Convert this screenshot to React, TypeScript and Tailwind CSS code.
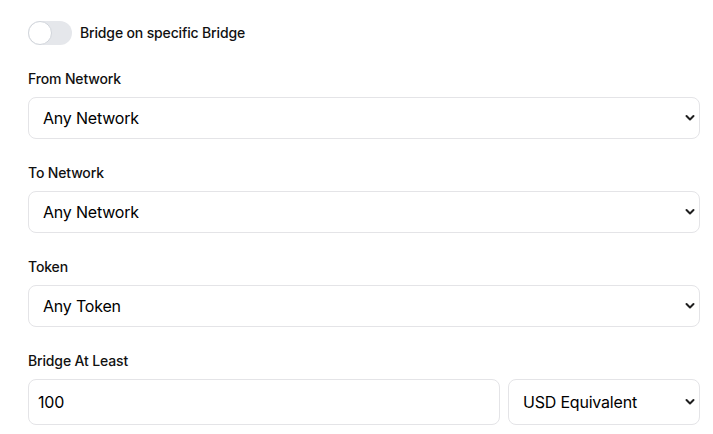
import { useState } from 'react';

const font = { fontFamily: 'Inter, "Liberation Sans", sans-serif' };

function Chevron() {
  return (
    <svg
      className="pointer-events-none absolute right-[5px] top-1/2 -translate-y-1/2"
      width="10"
      height="7"
      viewBox="0 0 10 7"
      fill="none"
    >
      <path d="M1.5 1.5L5 5L8.5 1.5" stroke="#1f1f1f" strokeWidth="2" strokeLinecap="round" strokeLinejoin="round" />
    </svg>
  );
}

function SelectBox({ value, options, className = '', height = 'h-[42px]' }: { value: string; options: string[]; className?: string; height?: string }) {
  return (
    <div className={`relative ${className}`}>
      <select
        defaultValue={value}
        className={`${height} w-full appearance-none rounded-lg border border-[#e4e4e7] bg-white pl-[14px] pr-8 text-base tracking-[-0.2px] text-black outline-none`}
      >
        {options.map(o => (
          <option key={o}>{o}</option>
        ))}
      </select>
      <Chevron />
    </div>
  );
}

export default function App() {
  const [enabled, setEnabled] = useState(false);

  return (
    <div className="min-h-screen bg-white pl-7 pr-[13px] pt-[21px]" style={font}>
      <div className="flex flex-col gap-6">
        <label className="flex items-center gap-2 cursor-pointer">
          <button
            type="button"
            onClick={() => setEnabled(!enabled)}
            className={`relative h-6 w-11 rounded-full ${enabled ? 'bg-blue-600' : 'bg-[#e5e7eb]'}`}
          >
            <span
              className={`absolute top-0 h-6 w-6 rounded-full border border-[#d1d5db] bg-white transition ${enabled ? 'left-5' : 'left-0'}`}
            />
          </button>
          <span className="text-sm font-medium tracking-[-0.15px] text-[#111]">Bridge on specific Bridge</span>
        </label>

        <div>
          <p className="text-sm font-medium tracking-[-0.15px] text-[#111]">From Network</p>
          <SelectBox className="mt-2" value="Any Network" options={['Any Network', 'Ethereum', 'Arbitrum']} />
        </div>

        <div>
          <p className="text-sm font-medium tracking-[-0.15px] text-[#111]">To Network</p>
          <SelectBox className="mt-2" value="Any Network" options={['Any Network', 'Ethereum', 'Arbitrum']} />
        </div>

        <div>
          <p className="text-sm font-medium tracking-[-0.15px] text-[#111]">Token</p>
          <SelectBox className="mt-2" value="Any Token" options={['Any Token', 'ETH', 'USDC']} />
        </div>

        <div>
          <p className="text-sm font-medium tracking-[-0.15px] text-[#111]">Bridge At Least</p>
          <div className="mt-2 flex gap-2">
            <input
              type="text"
              defaultValue="100"
              className="h-[46px] flex-1 rounded-lg border border-[#e4e4e7] bg-white px-[9px] text-base tracking-[-0.2px] text-black outline-none"
            />
            <SelectBox className="w-48" height="h-[46px]" value="USD Equivalent" options={['USD Equivalent', 'Token Amount']} />
          </div>
        </div>
      </div>
    </div>
  );
}
